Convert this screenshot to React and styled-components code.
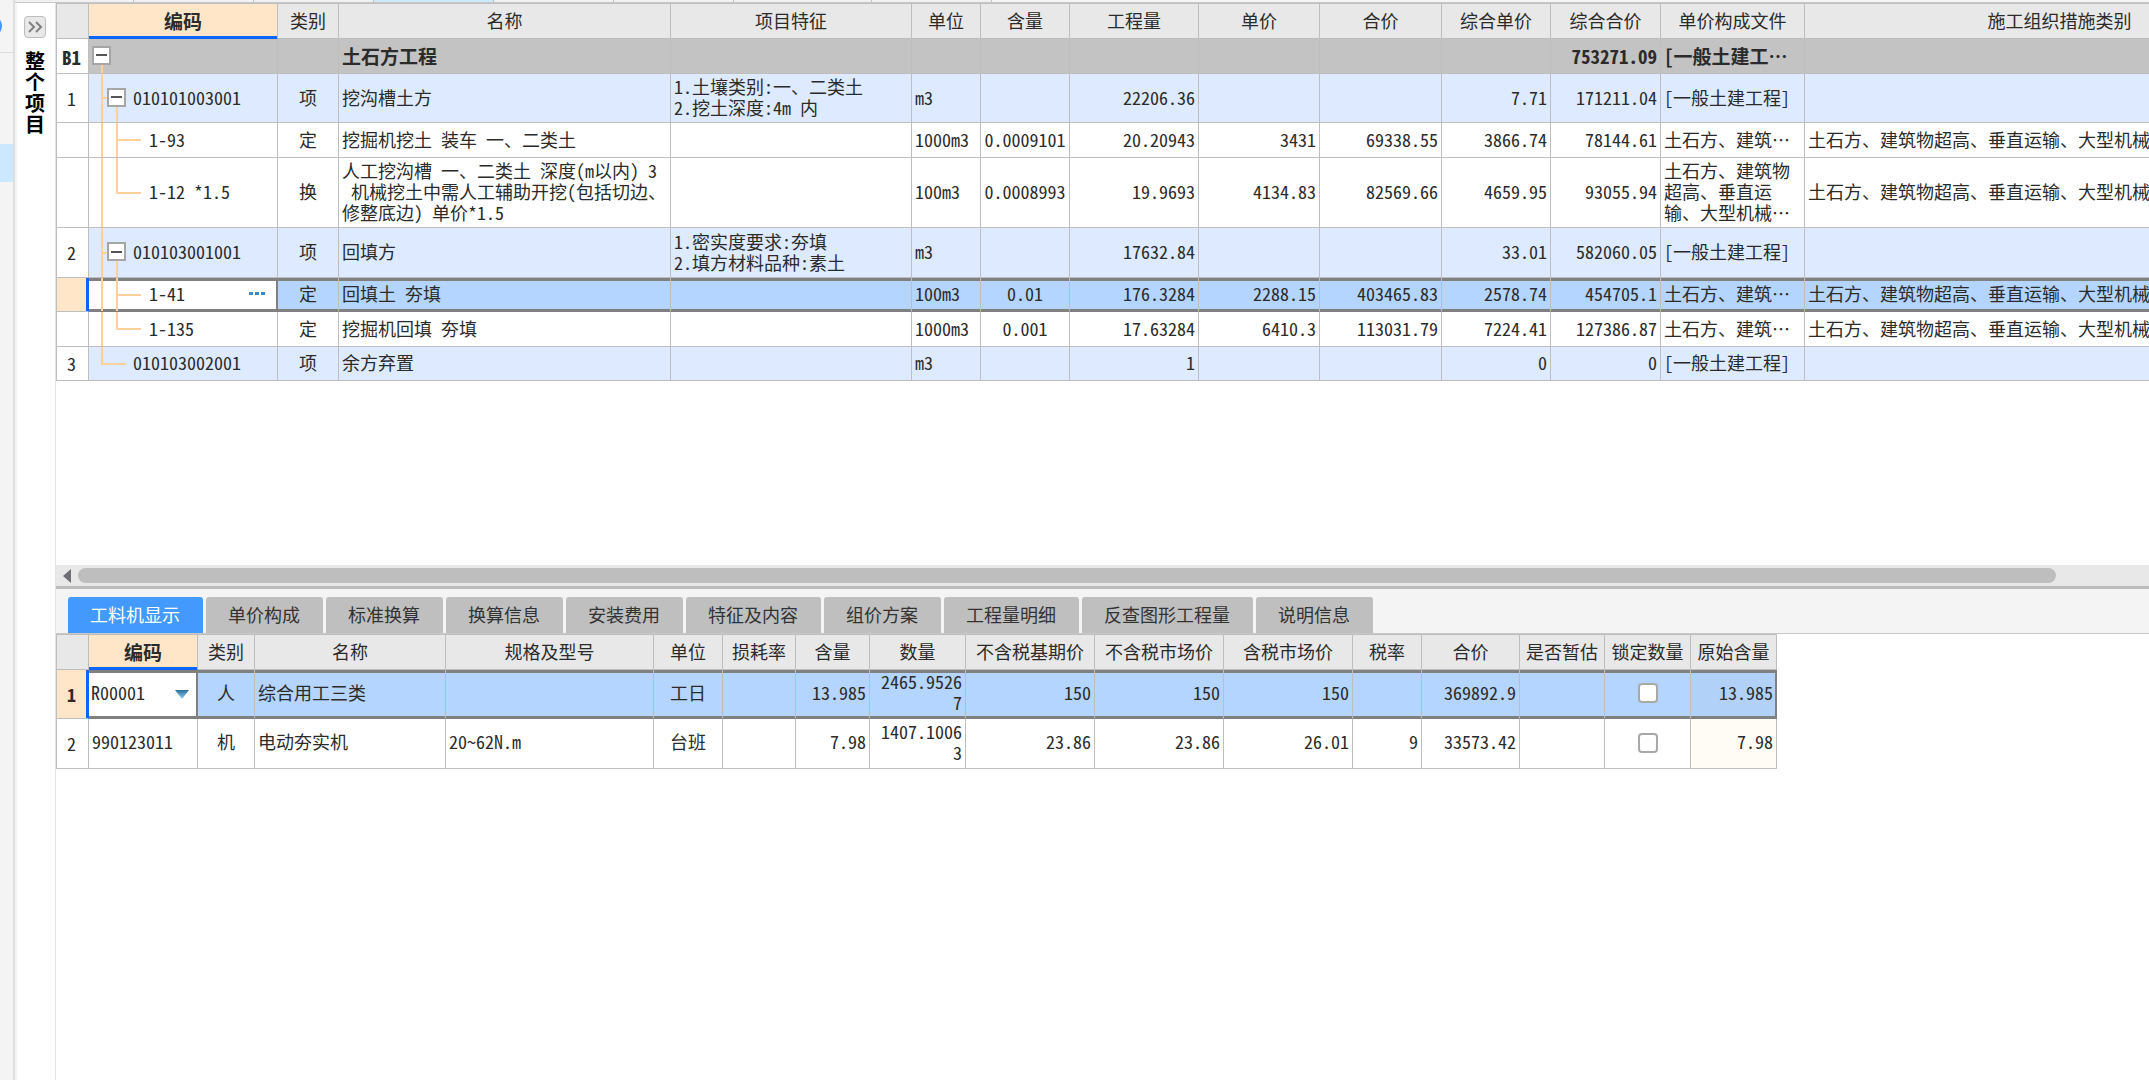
import React, { useState } from "react";
import styled, { createGlobalStyle, css } from "styled-components";

const LINE = "#bebebe";
const FRAME = "#808080";
const ACCENT = "#0a66ff";
const PEACH = "#ffe6c8";
const GUIDE = "#ffd09a";

const GlobalStyle = createGlobalStyle`
  *, *::before, *::after { box-sizing: border-box; }
  body {
    margin: 0;
    background: #fff;
    color: #2b2b2b;
    font-family: "Noto Sans CJK SC", "Liberation Sans", sans-serif;
    font-feature-settings: "hwid" 1;
    font-size: 18px;
    line-height: 21px;
    overflow: hidden;
  }
  button, select { font: inherit; font-feature-settings: inherit; color: inherit; }
`;

const Page = styled.div`
  display: flex;
  height: 100vh;
  overflow: hidden;
`;

const Strip = styled.aside`
  flex: none;
  width: 15px;
  background: #f4f4f4;
  border-right: 2px solid #dedede;
`;

const StripTop = styled.div`
  display: flex;
  align-items: center;
  height: 53px;
  border-bottom: 1px solid #dcdcdc;
`;

const StripSelected = styled.div`
  height: 38px;
  margin-top: 91px;
  background: #cce8ff;
`;

const Body = styled.div`
  flex: 1;
  min-width: 0;
  display: flex;
  flex-direction: column;
`;

const TopTabs = styled.div`
  display: flex;
  flex: none;
  height: 3px;
  background: #f4f4f4;
  border-bottom: 1px solid #c8c8c8;
`;

const TopTab = styled.div`
  width: ${(p) => p.$w}px;
  background: ${(p) => (p.$on ? "#cde8fa" : "#f0f0f0")};
  border-right: 1px solid ${LINE};
`;

const Columns = styled.div`
  flex: 1;
  min-height: 0;
  display: flex;
`;

const Sidebar = styled.nav`
  flex: none;
  width: 41px;
  display: flex;
  flex-direction: column;
  align-items: center;
  gap: 12px;
  padding: 13px 2px 0 0;
  border-left: 2px solid #f4f4f4;
  border-right: 1px solid #e4e4e4;
`;

const ExpandButton = styled.button`
  display: flex;
  align-items: center;
  justify-content: center;
  width: 22px;
  height: 22px;
  padding: 0;
  border: 1px solid #bcbcbc;
  border-radius: 4px;
  background: #e8e8e8;
`;

const SidebarTitle = styled.div`
  width: 20px;
  font-size: 20px;
  font-weight: 700;
  line-height: 21px;
  color: #000;
  word-break: break-all;
`;

const Main = styled.main`
  flex: 1;
  min-width: 0;
  display: flex;
  flex-direction: column;
`;

const Pane = styled.section`
  flex: ${(p) => p.$grow} 1 0;
  min-height: 0;
  overflow: hidden;
`;

const ScrollBar = styled.div`
  flex: none;
  display: flex;
  align-items: center;
  gap: 5px;
  height: 24px;
  padding-left: 5px;
  background: #e8e8e8;
  border-bottom: 3px solid #bcbcbc;
`;

const ScrollArrow = styled.button`
  display: flex;
  padding: 0 2px;
  border: 0;
  background: none;
`;

const ScrollTrack = styled.div`
  flex: 1;
  padding-right: 93px;
`;

const ScrollThumb = styled.div`
  height: 15px;
  border-radius: 8px;
  background: #bebebe;
`;

const TabBar = styled.div`
  display: flex;
  align-items: flex-end;
  gap: 3px;
  height: 45px;
  padding-left: 12px;
  background: #f4f4f4;
  border-bottom: 1px solid #c8c8c8;
`;

const Tab = styled.button`
  height: 36px;
  padding: 0 23px 2px 22px;
  border: 0;
  border-radius: 3px 3px 0 0;
  white-space: nowrap;
  background: ${(p) => (p.$on ? "#4499ff" : "#bfbfbf")};
  color: ${(p) => (p.$on ? "#fff" : "#333")};
`;

const Grid = styled.table`
  table-layout: fixed;
  width: ${(p) => p.$w}px;
  border-spacing: 0;
  border-top: 1px solid ${LINE};
  border-left: 1px solid ${LINE};
`;

const Col = styled.col`
  width: ${(p) => p.$w}px;
`;

const Row = styled.tr`
  height: ${(p) => p.$h}px;
  background: ${(p) => p.$bg || "#fff"};
  font-weight: ${(p) => (p.$bold ? 700 : 400)};
  font-size: ${(p) => (p.$bold ? 19 : 18)}px;
`;

const HeadCell = styled.th`
  padding: 0 0 2px;
  border-right: 1px solid ${LINE};
  border-bottom: 1px solid ${LINE};
  background: #e8e8e8;
  font-size: 18px;
  font-weight: 400;
  white-space: nowrap;
  ${(p) =>
    p.$active &&
    css`
      background: ${PEACH};
      border-bottom-color: ${ACCENT};
      box-shadow: inset 0 -2px 0 ${ACCENT};
      font-size: 19px;
      font-weight: 700;
    `}
`;

const Gutter = styled.th`
  padding: 0 2px 0 0;
  border-right: 1px solid ${LINE};
  border-bottom: 1px solid ${LINE};
  background: #fff;
  font-weight: ${(p) => (p.$bold ? 700 : 400)};
  ${(p) =>
    p.$selected &&
    css`
      background: ${PEACH};
      border-right-color: ${ACCENT};
      box-shadow: inset -2px 0 0 ${ACCENT};
    `}
`;

const Cell = styled.td`
  padding: 0 ${(p) => (p.$align === "center" ? 0 : 3)}px ${(p) => (p.$lift ? 4 : 2)}px;
  border-right: 1px solid ${LINE};
  border-bottom: 1px solid ${LINE};
  text-align: ${(p) => p.$align || "left"};
  white-space: pre;
  overflow: hidden;
  ${(p) => p.$tint && css`background: ${p.$tint};`}
  ${(p) =>
    p.$selected &&
    css`
      border-bottom-color: ${FRAME};
      box-shadow: inset 0 3px 0 ${FRAME}, inset 0 -2px 0 ${FRAME};
    `}
  ${(p) =>
    p.$framed &&
    css`
      border-right-color: ${FRAME};
      border-bottom-color: ${FRAME};
      box-shadow: inset 0 3px 0 ${FRAME}, inset 0 -2px 0 ${FRAME}, inset -1px 0 0 ${FRAME};
    `}
`;

const CodeCell = styled(Cell)`
  padding: 0;
`;

const Code = styled.div`
  position: relative;
  display: flex;
  align-items: center;
  height: ${(p) => p.$h - 1}px;
  padding: 0 0 2px ${(p) => p.$indent}px;
  gap: 7px;
`;

const GuideLines = styled.svg`
  position: absolute;
  left: 0;
  top: 0;
`;

const Toggle = styled.button`
  position: relative;
  display: flex;
  align-items: center;
  justify-content: center;
  width: 19px;
  height: 19px;
  padding: 0;
  border: 2px solid #a6a6a6;
  background: #fff;
`;

const MoreButton = styled.button`
  display: flex;
  margin-left: auto;
  padding: 8px 12px;
  border: 0;
  background: none;
`;

const SelectBox = styled.label`
  position: relative;
  display: flex;
  align-items: center;
`;

const Select = styled.select`
  width: 100%;
  height: 28px;
  padding: 0 2px 4px;
  border: 0;
  appearance: none;
  background: transparent;
  outline: none;
`;

const SelectArrow = styled.svg`
  position: absolute;
  right: 8px;
  pointer-events: none;
`;

const Check = styled.input`
  display: block;
  appearance: none;
  width: 20px;
  height: 20px;
  margin: 0 auto;
  border: 2px solid #a8a8a8;
  border-radius: 4px;
  background: #fff;
`;

const BLUE = "#ddeaff";
const PICKED = "#b3d5ff";
const MEASURE = "土石方、建筑物超高、垂直运输、大型机械";
const GENERAL = "[一般土建工程]";
const SHORT = "土石方、建筑…";

const upperCols = [
  ["", 32], ["编码", 189], ["类别", 61], ["名称", 332], ["项目特征", 241], ["单位", 69],
  ["含量", 89], ["工程量", 129], ["单价", 121], ["合价", 122], ["综合单价", 109],
  ["综合合价", 110], ["单价构成文件", 144], ["施工组织措施类别", 510],
];
const upperAlign = ["center", "left", "left", "left", "center", "right", "right", "right", "right", "right", "left", "left"];

const upperRows = [
  { no: "B1", h: 35, kind: "root", code: "", bg: "#c3c3c3", cells: ["", "土石方工程", "", "", "", "", "", "", "", "753271.09", "[一般土建工…", ""] },
  { no: "1", h: 49, kind: "item", code: "010101003001", bg: BLUE, cells: ["项", "挖沟槽土方", "1.土壤类别:一、二类土\n2.挖土深度:4m 内", "m3", "", "22206.36", "", "", "7.71", "171211.04", GENERAL, ""] },
  { no: "", h: 35, kind: "sub", code: "1-93", cells: ["定", "挖掘机挖土 装车 一、二类土", "", "1000m3", "0.0009101", "20.20943", "3431", "69338.55", "3866.74", "78144.61", SHORT, MEASURE] },
  { no: "", h: 70, kind: "subLast", code: "1-12 *1.5", cells: ["换", "人工挖沟槽 一、二类土 深度(m以内) 3\n 机械挖土中需人工辅助开挖(包括切边、\n修整底边) 单价*1.5", "", "100m3", "0.0008993", "19.9693", "4134.83", "82569.66", "4659.95", "93055.94", "土石方、建筑物\n超高、垂直运\n输、大型机械…", MEASURE] },
  { no: "2", h: 50, kind: "item", code: "010103001001", bg: BLUE, cells: ["项", "回填方", "1.密实度要求:夯填\n2.填方材料品种:素土", "m3", "", "17632.84", "", "", "33.01", "582060.05", GENERAL, ""] },
  { no: "", h: 34, kind: "sub", code: "1-41", bg: PICKED, selected: true, cells: ["定", "回填土 夯填", "", "100m3", "0.01", "176.3284", "2288.15", "403465.83", "2578.74", "454705.1", SHORT, MEASURE] },
  { no: "", h: 35, kind: "subLast", code: "1-135", cells: ["定", "挖掘机回填 夯填", "", "1000m3", "0.001", "17.63284", "6410.3", "113031.79", "7224.41", "127386.87", SHORT, MEASURE] },
  { no: "3", h: 34, kind: "leaf", code: "010103002001", bg: BLUE, cells: ["项", "余方弃置", "", "m3", "", "1", "", "", "0", "0", GENERAL, ""] },
];

const lowerCols = [
  ["", 32], ["编码", 109], ["类别", 57], ["名称", 191], ["规格及型号", 208], ["单位", 69],
  ["损耗率", 73], ["含量", 74], ["数量", 96], ["不含税基期价", 129], ["不含税市场价", 129],
  ["含税市场价", 129], ["税率", 69], ["合价", 98], ["是否暂估", 85], ["锁定数量", 86], ["原始含量", 86],
];
const lowerAlign = ["center", "left", "left", "center", "right", "right", "right", "right", "right", "right", "right", "right", "center", "center", "right"];

const lowerRows = [
  { no: "1", h: 49, code: "R00001", bg: PICKED, selected: true, cells: ["人", "综合用工三类", "", "工日", "", "13.985", "2465.9526\n7", "150", "150", "150", "", "369892.9", "", null, "13.985"] },
  { no: "2", h: 50, code: "990123011", cells: ["机", "电动夯实机", "20~62N.m", "台班", "", "7.98", "1407.1006\n3", "23.86", "23.86", "26.01", "9", "33573.42", "", null, "7.98"] },
];

const tabs = ["工料机显示", "单价构成", "标准换算", "换算信息", "安装费用", "特征及内容", "组价方案", "工程量明细", "反查图形工程量", "说明信息"];
const topTabs = [119, 120, 120, 120, 120, 120, 138, 120];

const indents = { root: 3, item: 18, sub: 60, subLast: 60, leaf: 44 };

const total = (cols) => cols.reduce((sum, c) => sum + c[1], 1);

function TreeGuides({ kind, h }) {
  const mid = Math.round((h - 1) / 2);
  const paths = {
    root: `M13 ${mid}V${h}`,
    item: `M13 0V${h}M13 ${mid}H28V${h}`,
    sub: `M13 0V${h}M28 0V${h}M28 ${mid}H52`,
    subLast: `M13 0V${h}M28 0V${mid}H52`,
    leaf: `M13 0V${mid}H37`,
  };
  return (
    <GuideLines width="60" height={h} aria-hidden="true">
      <path d={paths[kind]} fill="none" stroke={GUIDE} strokeWidth="2" />
    </GuideLines>
  );
}

function Head({ cols, h }) {
  return (
    <>
      <colgroup>{cols.map(([name, w]) => <Col key={name} $w={w} />)}</colgroup>
      <thead>
        <Row $h={h}>
          {cols.map(([name]) => <HeadCell key={name} scope="col" $active={name === "编码"}>{name}</HeadCell>)}
        </Row>
      </thead>
    </>
  );
}

function UpperTable() {
  return (
    <Grid $w={total(upperCols)}>
      <Head cols={upperCols} h={35} />
      <tbody>
        {upperRows.map((r, i) => (
          <Row key={i} $h={r.h} $bg={r.bg} $bold={r.kind === "root"}>
            <Gutter scope="row" $bold={r.kind === "root"} $selected={r.selected}>{r.no}</Gutter>
            <CodeCell $framed={r.selected} $tint={r.selected ? "#fff" : undefined}>
              <Code $h={r.h} $indent={indents[r.kind]}>
                <TreeGuides kind={r.kind} h={r.h} />
                {(r.kind === "root" || r.kind === "item") && (
                  <Toggle aria-label="折叠">
                    <svg width="11" height="2"><rect width="11" height="2" fill="#555" /></svg>
                  </Toggle>
                )}
                {r.code}
                {r.selected && (
                  <MoreButton aria-label="更多">
                    <svg width="16" height="4" fill="#3a8ad0">
                      <rect width="4" height="3" /><rect x="6" width="4" height="3" /><rect x="12" width="4" height="3" />
                    </svg>
                  </MoreButton>
                )}
              </Code>
            </CodeCell>
            {r.cells.map((c, j) => <Cell key={j} $align={upperAlign[j]} $selected={r.selected}>{c}</Cell>)}
          </Row>
        ))}
      </tbody>
    </Grid>
  );
}

function LowerTable() {
  return (
    <Grid $w={total(lowerCols)}>
      <Head cols={lowerCols} h={35} />
      <tbody>
        {lowerRows.map((r) => (
          <Row key={r.no} $h={r.h} $bg={r.bg}>
            <Gutter scope="row" $bold={r.selected} $selected={r.selected}>{r.no}</Gutter>
            {r.selected ? (
              <CodeCell $framed $tint="#fff">
                <SelectBox>
                  <Select aria-label="编码" defaultValue={r.code}><option>{r.code}</option></Select>
                  <SelectArrow width="14" height="9">
                    <defs>
                      <linearGradient id="arrow" x1="0" y1="0" x2="0" y2="1">
                        <stop offset="0" stopColor="#2c6f9c" /><stop offset="1" stopColor="#8fd0f2" />
                      </linearGradient>
                    </defs>
                    <path d="M0 0H14L7 9Z" fill="url(#arrow)" />
                  </SelectArrow>
                </SelectBox>
              </CodeCell>
            ) : (
              <Cell $lift>{r.code}</Cell>
            )}
            {r.cells.map((c, j) => (
              <Cell
                key={j}
                $lift={c !== null}
                $align={lowerAlign[j]}
                $selected={r.selected}
                $framed={r.selected && j === r.cells.length - 1}
                $tint={j === r.cells.length - 1 ? (r.selected ? "#b1d1f8" : "#fffbf5") : undefined}
              >
                {c === null ? <Check type="checkbox" aria-label="锁定数量" /> : c}
              </Cell>
            ))}
          </Row>
        ))}
      </tbody>
    </Grid>
  );
}

export default function App() {
  const [active, setActive] = useState(tabs[0]);
  return (
    <Page>
      <GlobalStyle />
      <Strip>
        <StripTop>
          <svg width="3" height="22" aria-hidden="true"><circle cx="-9" cy="11" r="11" fill="#4499ff" /></svg>
        </StripTop>
        <StripSelected />
      </Strip>
      <Body>
        <TopTabs>{topTabs.map((w, i) => <TopTab key={i} $w={w} $on={i === 3} />)}</TopTabs>
        <Columns>
          <Sidebar>
            <ExpandButton aria-label="展开">
              <svg width="16" height="12" fill="none" stroke="#808080" strokeWidth="2">
                <path d="M2 1L7 6L2 11M9 1L14 6L9 11" />
              </svg>
            </ExpandButton>
            <SidebarTitle>整个项目</SidebarTitle>
          </Sidebar>
          <Main>
            <Pane $grow={562}><UpperTable /></Pane>
            <ScrollBar>
              <ScrollArrow aria-label="向左滚动">
                <svg width="8" height="14"><path d="M8 0V14L0 7Z" fill="#6e6e78" /></svg>
              </ScrollArrow>
              <ScrollTrack><ScrollThumb /></ScrollTrack>
            </ScrollBar>
            <Pane $grow={491}>
              <TabBar role="tablist">
                {tabs.map((t) => (
                  <Tab key={t} role="tab" aria-selected={t === active} $on={t === active} onClick={() => setActive(t)}>{t}</Tab>
                ))}
              </TabBar>
              <LowerTable />
            </Pane>
          </Main>
        </Columns>
      </Body>
    </Page>
  );
}
